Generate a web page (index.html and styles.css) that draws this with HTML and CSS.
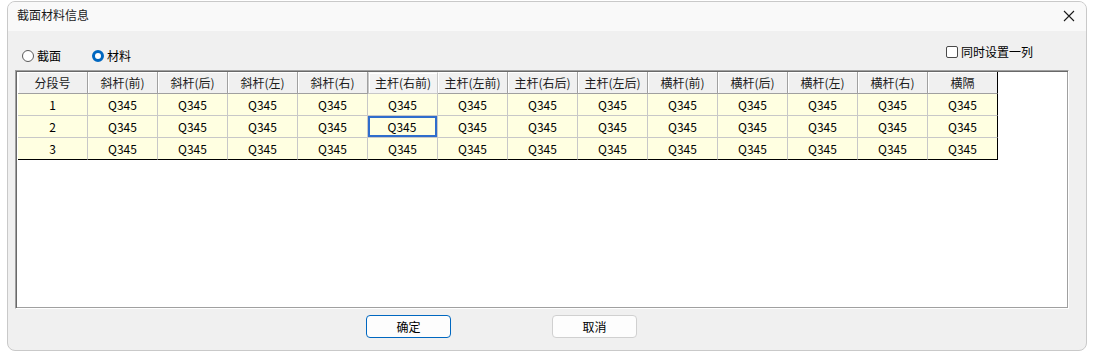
FILE: index.html
```html
<!DOCTYPE html>
<html lang="zh">
<head>
<meta charset="utf-8">
<title>截面材料信息</title>
<link rel="stylesheet" href="styles.css">
</head>
<body>
<div class="window">
  <div class="titlebar">
    <span class="title">截面材料信息</span>
    <svg class="close" width="12" height="12" viewBox="0 0 12 12"><path d="M1 1 L11 11 M11 1 L1 11" stroke="#1a1a1a" stroke-width="1.1" fill="none"/></svg>
  </div>
  <div class="content">
    <div class="options">
      <div class="radios">
        <label class="radio"><span class="dot"></span>截面</label>
        <label class="radio checked"><span class="dot"></span>材料</label>
      </div>
      <label class="check"><span class="box"></span>同时设置一列</label>
    </div>
    <div class="frame">
      <div class="grid">
        <div class="hd">分段号</div>
        <div class="hd">斜杆(前)</div>
        <div class="hd">斜杆(后)</div>
        <div class="hd">斜杆(左)</div>
        <div class="hd">斜杆(右)</div>
        <div class="hd sel">主杆(右前)</div>
        <div class="hd">主杆(左前)</div>
        <div class="hd">主杆(右后)</div>
        <div class="hd">主杆(左后)</div>
        <div class="hd">横杆(前)</div>
        <div class="hd">横杆(后)</div>
        <div class="hd">横杆(左)</div>
        <div class="hd">横杆(右)</div>
        <div class="hd last">横隔</div>

        <div class="c">1</div><div class="c">Q345</div><div class="c">Q345</div><div class="c">Q345</div><div class="c">Q345</div><div class="c">Q345</div><div class="c">Q345</div><div class="c">Q345</div><div class="c">Q345</div><div class="c">Q345</div><div class="c">Q345</div><div class="c">Q345</div><div class="c">Q345</div><div class="c last">Q345</div>

        <div class="c">2</div><div class="c">Q345</div><div class="c">Q345</div><div class="c">Q345</div><div class="c">Q345</div><div class="c focus"><span>Q345</span></div><div class="c">Q345</div><div class="c">Q345</div><div class="c">Q345</div><div class="c">Q345</div><div class="c">Q345</div><div class="c">Q345</div><div class="c">Q345</div><div class="c last">Q345</div>

        <div class="c bottom">3</div><div class="c bottom">Q345</div><div class="c bottom">Q345</div><div class="c bottom">Q345</div><div class="c bottom">Q345</div><div class="c bottom">Q345</div><div class="c bottom">Q345</div><div class="c bottom">Q345</div><div class="c bottom">Q345</div><div class="c bottom">Q345</div><div class="c bottom">Q345</div><div class="c bottom">Q345</div><div class="c bottom">Q345</div><div class="c bottom last">Q345</div>
      </div>
    </div>
    <div class="buttons">
      <button class="btn primary">确定</button>
      <button class="btn">取消</button>
    </div>
  </div>
</div>
</body>
</html>
```

FILE: styles.css
```css
* { box-sizing: border-box; }
html, body { margin: 0; padding: 0; background: #ffffff; }
body {
  padding: 1px 7px 0 7px;
  font-family: "Noto Sans CJK SC", "Noto Sans", sans-serif;
  font-size: 12px;
  color: #000;
}
.window {
  width: 1080px;
  height: 350px;
  border: 1px solid #c9c9c9;
  border-radius: 8px;
  background: #f0f0f0;
  overflow: hidden;
  display: flex;
  flex-direction: column;
}
.titlebar {
  height: 29px;
  background: #f9f9f9;
  display: flex;
  align-items: center;
  justify-content: space-between;
  padding: 0 10px 3px 9px;
  flex: none;
}
.title { font-size: 12px; line-height: 16px; color: #1a1a1a; }
.close { display: block; margin-right: 1px; margin-top: 2px; }
.content {
  flex: 1;
  display: flex;
  flex-direction: column;
  padding: 0 17px 0 7px;
}
.options {
  height: 39px;
  display: flex;
  justify-content: space-between;
  align-items: flex-start;
  flex: none;
}
.radios { display: flex; gap: 31px; padding-top: 17px; padding-left: 7px; }
.radio { display: flex; align-items: center; gap: 3px; line-height: 16px; }
.radio .dot {
  width: 12px; height: 12px; border-radius: 50%;
  border: 1px solid #5a5a5a; background: #fff;
}
.radio.checked .dot {
  border: 3.5px solid #0067c0; background: #fff;
}
.check { display: flex; align-items: center; gap: 3px; line-height: 16px; padding-top: 13px; padding-right: 36px; }
.check .box {
  width: 12px; height: 12px; border-radius: 2px;
  border: 1px solid #4a4a4a; background: #fff;
}
.frame {
  height: 239px;
  border-top: 1px solid #a0a0a0;
  border-left: 1px solid #a0a0a0;
  border-right: 1px solid #ffffff;
  border-bottom: 1px solid #ffffff;
  box-shadow: inset 1px 1px 0 #696969, inset -1px -1px 0 #a0a0a0;
  background: #ffffff;
  padding: 1px 0 0 2px;
  flex: none;
}
.grid {
  display: grid;
  grid-template-columns: repeat(14, 70px);
  grid-auto-rows: 22px;
  width: 980px;
}
.hd {
  background: #f0f0f0;
  border-right: 1px solid #a0a0a0;
  border-bottom: 1px solid #a0a0a0;
  box-shadow: inset 1px 1px 0 #ffffff;
  display: flex; align-items: center; justify-content: center;
  color: #1a1a1a;
  line-height: 16px;
}
.hd.sel {
  box-shadow: inset 1px 1px 0 #ffffff;
  border: 1px solid #c8c8c8;
  border-top-color: #f8f8f8;
  background: #f3f3f3;
}
.hd.last { border-right: 1px solid #000; }
.c {
  background: #ffffe1;
  border-right: 1px solid #c8c8c8;
  border-bottom: 1px solid #c8c8c8;
  display: flex; align-items: center; justify-content: center;
  line-height: 16px;
}
.c.last { border-right-color: #000; }
.c.bottom { border-bottom-color: #000; }
.c.focus { padding: 0; }
.c.focus span {
  width: 69px; height: 21px;
  border: 2px solid #2f6dcc;
  display: flex; align-items: center; justify-content: center;
  margin-left: -1px;
}
.buttons {
  display: flex;
  gap: 101px;
  padding-left: 351px;
  padding-top: 6px;
}
.btn {
  width: 85px; height: 23px;
  font-family: inherit; font-size: 12px;
  background: #fdfdfd;
  border: 1px solid #d0d0d0;
  border-radius: 4px;
  color: #000;
  padding: 0;
}
.btn.primary { border-color: #0067c0; }
```
